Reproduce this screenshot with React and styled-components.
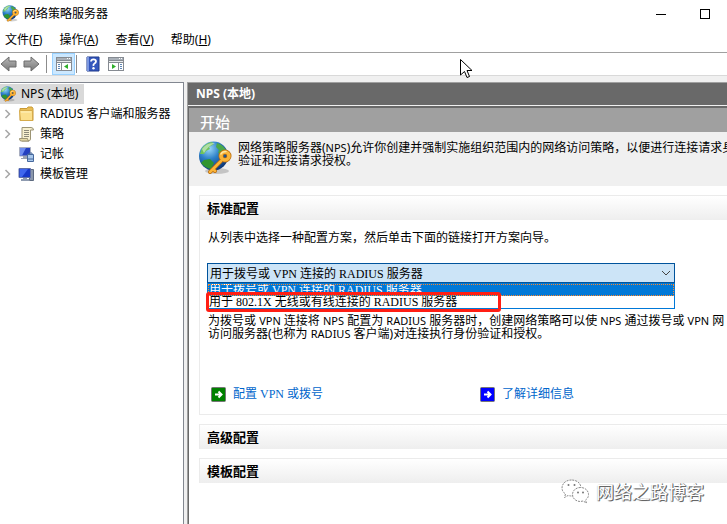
import React from "react";
import styled, { createGlobalStyle } from "styled-components";

const UI = '"Noto Sans", "Noto Sans CJK SC", sans-serif';
const SONG = '"Liberation Serif", "Noto Sans CJK SC", serif';

const GlobalStyle = createGlobalStyle`
  *, *::before, *::after { box-sizing: border-box; }
  body { margin: 0; background: #fff; font: 12px/20px ${UI}; color: #000; overflow: hidden; }
  button, select { font: inherit; color: inherit; }
  svg { flex-shrink: 0; }
`;

const Window = styled.div`
  position: relative;
  display: flex;
  flex-direction: column;
  height: 100vh;
  overflow: hidden;
  background: #f0f0f0;
`;

const TitleBar = styled.header`
  display: flex;
  align-items: center;
  height: 27px;
  padding-left: 2px;
  background: #fff;
`;

const Title = styled.h1`
  flex: 1;
  margin: 0 0 0 5px;
  font-size: 12px;
  font-weight: 400;
`;

const CaptionButton = styled.button`
  display: flex;
  align-items: center;
  justify-content: center;
  width: 44px;
  height: 26px;
  padding: 0;
  border: 0;
  background: none;
`;

const MenuBar = styled.nav`
  display: flex;
  gap: 17px;
  height: 25px;
  padding: 0 5px;
  background: #fff;
`;

const MenuItem = styled.button`
  padding: 0;
  border: 0;
  background: none;
  line-height: 26px;
`;

const ToolBar = styled.div`
  display: flex;
  align-items: center;
  height: 24px;
  border-top: 1px solid #a0a0a0;
  border-bottom: 1px solid #d9d9d9;
  background: #fff;
`;

const ToolButton = styled.button`
  display: flex;
  align-items: center;
  justify-content: center;
  width: 23px;
  height: 22px;
  padding: 0;
  border: 1px solid ${(p) => (p.$active ? "#99d1ff" : "transparent")};
  background: ${(p) => (p.$active ? "#cce8ff" : "none")};
`;

const NavButton = styled(ToolButton)`
  justify-content: flex-start;
  border: 0;
`;

const Separator = styled.span`
  width: 1px;
  height: 18px;
  margin: 0 ${(p) => p.$after || 0}px 0 ${(p) => p.$before || 0}px;
  background: #8c8c8c;
`;

const Workspace = styled.div`
  flex: 1;
  display: grid;
  grid-template-columns: 184px minmax(0, 1fr);
  gap: 3px;
  padding-top: 6px;
  min-height: 0;
`;

const TreePane = styled.aside`
  border-top: 1px solid #828790;
  border-right: 1px solid #828790;
  background: #fff;
`;

const Tree = styled.ul`
  margin: 0;
  padding: 1px 0 0;
  list-style: none;
`;

const TreeItem = styled.li`
  display: flex;
  align-items: center;
  width: max-content;
  height: 20px;
  padding: 0 6px 0 ${(p) => (p.$root ? 0 : 4)}px;
  background: ${(p) => (p.$root ? "#d9d9d9" : "none")};
  white-space: nowrap;
`;

const Twisty = styled.span`
  display: flex;
  width: 14px;
`;

const TreeLabel = styled.span`
  margin-left: 5px;
`;

const DetailPane = styled.main`
  display: flex;
  flex-direction: column;
  min-width: 0;
  border-top: 1px solid #a0a0a0;
  border-left: 1px solid #a0a0a0;
`;

const PaneHeader = styled.h2`
  height: 22px;
  margin: 0;
  padding-left: 8px;
  background: #696969;
  color: #fff;
  font-size: 12px;
  line-height: 22px;
`;

const Content = styled.div`
  flex: 1;
  margin-top: 1px;
  border-top: 2px solid #696969;
  border-left: 1px solid #696969;
  background: #fff;
  overflow: hidden;
`;

const Band = styled.h3`
  height: 24px;
  margin: 0;
  padding-left: 11px;
  background: #a0a0a0;
  color: #fff;
  font-size: 15px;
  font-weight: 500;
  line-height: 28px;
`;

const Intro = styled.div`
  display: flex;
  gap: 6px;
  height: 54px;
  padding: 9px 0 0 9px;
  background: #f0f0f0;
`;

const Text = styled.p`
  display: block;
  margin: 0;
  line-height: 13px;
  white-space: nowrap;
`;

const Latin = styled.span`
  font-size: 11px;
  line-height: 1;
`;

const Groups = styled.div`
  display: flex;
  flex-direction: column;
  gap: 9px;
  padding: 9px 0 0 10px;
`;

const Group = styled.section`
  border: 1px solid #ebebeb;
  border-width: 1px 0 ${(p) => (p.$closed ? 0 : 1)}px 1px;
`;

const GroupTitle = styled.h4`
  height: 24px;
  margin: 0;
  padding-left: 7px;
  background: linear-gradient(#fff, #eee);
  font-size: 13px;
  line-height: 25px;
`;

const GroupBody = styled.div`
  padding: 11px 0 12px 8px;
`;

const Combo = styled.div`
  position: relative;
  width: 468px;
  max-width: 100%;
  margin: 19px 0 31px -1px;
  font-family: ${SONG};
`;

const Select = styled.select`
  display: block;
  width: 100%;
  height: 20px;
  padding: 0 24px 0 2px;
  border: 1px solid #00539c;
  border-radius: 0;
  outline: 0;
  background: #cce4f7;
  appearance: none;
`;

const Arrow = styled.svg`
  position: absolute;
  right: 4px;
  top: 7px;
  pointer-events: none;
`;

const OptionList = styled.ul`
  position: absolute;
  top: 20px;
  left: 0;
  right: 0;
  margin: 0;
  padding: 0;
  border: 1px solid #0078d7;
  background: #fff;
  list-style: none;
`;

const Option = styled.li`
  height: 12px;
  padding-left: 1px;
  outline: ${(p) => (p.$on ? "1px dotted #ff8728" : "0")};
  outline-offset: -1px;
  background: ${(p) => (p.$on ? "#0078d7" : "#fff")};
  color: ${(p) => (p.$on ? "#fff" : "#000")};
  line-height: 12px;
  white-space: nowrap;
  overflow: hidden;
`;

const Marker = styled.div`
  position: absolute;
  top: 29px;
  left: -1px;
  width: 295px;
  height: 20px;
  border: 3px solid #ff1e14;
  border-radius: 3px;
`;

const Links = styled.div`
  display: grid;
  grid-template-columns: 269px auto;
  margin: 46px 0 0 3px;
`;

const ActionLink = styled.a`
  display: flex;
  align-items: center;
  gap: 7px;
  height: 16px;
  color: #0066cc;
  font-family: ${SONG};
  line-height: 16px;
  text-decoration: none;
`;

const Pointer = styled.svg`
  position: absolute;
  left: 460px;
  top: 59px;
`;

const Watermark = styled.div`
  position: absolute;
  right: 23px;
  bottom: 18px;
  display: flex;
  align-items: center;
  gap: 6px;
  color: #fff;
  font-size: 18px;
  line-height: 28px;
  text-shadow: 1px 1px 0 #666, 1px 0 0 #888, 0 1px 1px #999;
`;

function Globe({ size }) {
  return (
    <svg width={size} height={size} viewBox="0 0 34 34" aria-hidden="true">
      <defs>
        <radialGradient id="sea" cx="0.35" cy="0.25" r="0.8">
          <stop offset="0" stopColor="#9bd8f8" />
          <stop offset="0.45" stopColor="#2b7fc8" />
          <stop offset="1" stopColor="#0b3272" />
        </radialGradient>
      </defs>
      <ellipse cx="19" cy="30" rx="12" ry="3" fill="#000" opacity="0.18" />
      <circle cx="15.500" cy="15" r="14.500" fill="url(#sea)" />
      <path d="M4 7Q8 2 14 1L16 3 11 6 12 8 8 10 6 13 2 13Z" fill="#6fc35a" />
      <path d="M19 2Q26 4 29 11L26 11 24 13 20 12 21 9 18 6Z" fill="#4aa84a" />
      <path d="M6 19L12 18 16 22 13 28Q7 27 3 22Z" fill="#2f9430" />
      <path d="M4 8Q9 1 17 2Q10 5 6 12Z" fill="#fff" opacity="0.45" />
      <g fill="none" strokeLinecap="round" strokeLinejoin="round">
        <path d="M23 20L12 31M15 28L17 30" stroke="#b56a10" strokeWidth="4" />
        <circle cx="27" cy="15" r="4" stroke="#b56a10" strokeWidth="5" />
        <path d="M23 20L12 31M15 28L17 30" stroke="#fbb437" strokeWidth="2.500" />
        <circle cx="27" cy="15" r="4" stroke="#fbb437" strokeWidth="3.500" />
        <path d="M23 13Q24 10.500 28 10.500" stroke="#ffe6a0" strokeWidth="1.500" />
      </g>
    </svg>
  );
}

function NavArrow({ forward }) {
  const d = forward
    ? "M1 5H8V1L16 8 8 15V11H1Z"
    : "M16 5H9V1L1 8 9 15V11H16Z";
  return (
    <svg width="17" height="16" viewBox="0 0 17 16" aria-hidden="true">
      <defs>
        <linearGradient id="steel" x2="0" y2="1">
          <stop offset="0" stopColor="#b9b9b9" />
          <stop offset="1" stopColor="#777" />
        </linearGradient>
      </defs>
      <path d={d} fill="url(#steel)" stroke="#6c6c6c" strokeLinejoin="round" />
    </svg>
  );
}

function PanelIcon({ right }) {
  return (
    <svg width="16" height="14" viewBox="0 0 16 14" shapeRendering="crispEdges" aria-hidden="true">
      <path d="M0 0H16V14H0Z" fill="#868b92" />
      <path d="M1 1H15V3H1Z" fill="#a9b0b8" />
      <path d="M11 1h1v1h-1zM13 1h1v1h-1z" fill="#fff" />
      <path d="M1 4H15V5H1Z" fill="#e8eaec" />
      <path d={right ? "M1 6H10V13H1ZM11 6H15V13H11Z" : "M1 6H5V13H1ZM6 6H15V13H6Z"} fill="#fff" />
      <path d={right ? "M12 7h2v1h-2zM12 9h2v1h-2zM12 11h2v1h-2z" : "M2 7h2v1h-2zM2 9h2v1h-2zM2 11h2v1h-2z"} fill="#5f86b5" />
      <path d={right ? "M4 7L8 9.500 4 12Z" : "M12 7L8 9.500 12 12Z"} fill="#2fae2a" shapeRendering="auto" />
    </svg>
  );
}

function HelpIcon() {
  return (
    <svg width="14" height="16" viewBox="0 0 14 16" aria-hidden="true">
      <path d="M1 1H13V15H1Z" fill="#3457bd" stroke="#1f3a8c" />
      <path d="M1 1H3V15H1Z" fill="#7b97e0" />
      <path d="M5 5.500Q5.200 3.300 7.500 3.300T10 5.300Q10 6.700 8.500 7.500T7.500 10" fill="none" stroke="#fff" strokeWidth="1.800" />
      <circle cx="7.500" cy="12.300" r="1.200" fill="#fff" />
    </svg>
  );
}

function Chevron() {
  return (
    <svg width="8" height="10" viewBox="0 0 8 10" aria-hidden="true">
      <path d="M1.500 1L5.500 5 1.500 9" fill="none" stroke="#a6a6a6" strokeWidth="1.500" />
    </svg>
  );
}

function FolderIcon() {
  return (
    <svg width="17" height="16" viewBox="0 0 17 16" aria-hidden="true">
      <path d="M2 2.500H9L10 1H14L15 2.500V14.500H2Z" fill="#e9bd55" stroke="#c99a35" />
      <path d="M1.500 4.500H14.500V14.500H2.500Z" fill="#fbdf8c" stroke="#d6ab4b" />
      <path d="M3 6H13" stroke="#fff2c0" />
    </svg>
  );
}

function ScrollIcon() {
  return (
    <svg width="17" height="16" viewBox="0 0 17 16" aria-hidden="true">
      <path d="M4 1.500H13Q15.500 1.500 15.500 4H12.500V13Q12.500 15 10 15H4Z" fill="#f7f0cf" stroke="#9c9474" />
      <path d="M1.500 12.500H9.500Q9.500 15 11 15H3Q1.500 15 1.500 12.500Z" fill="#e5d9a5" stroke="#9c9474" />
      <path d="M6 4.500H11M6 6.500H11M6 8.500H11M6 10.500H11" stroke="#8c8a7a" />
    </svg>
  );
}

function LogIcon() {
  return (
    <svg width="17" height="16" viewBox="0 0 17 16" aria-hidden="true">
      <path d="M1.500 1.500H12.500V10H1.500Z" fill="#2440c0" stroke="#a8aec0" />
      <path d="M2 2H8L4 9.500H2Z" fill="#6f8df0" />
      <path d="M5 10H9V12H11V13H3V12H5Z" fill="#9aa2b2" />
      <path d="M9.500 8.500H15.500V15.500H9.500Z" fill="#a9c8ec" stroke="#46689c" />
      <path d="M11 8V7H14V8M10 13H15" stroke="#46689c" fill="none" />
    </svg>
  );
}

function ServerIcon() {
  return (
    <svg width="17" height="16" viewBox="0 0 17 16" aria-hidden="true">
      <path d="M11.500 3.500H15.500V14.500H11.500Z" fill="#8b98ad" stroke="#5e6b80" />
      <path d="M1 2.500H12.500V11.500H1Z" fill="#1738c8" stroke="#5f6fa8" />
      <path d="M2 3H10L4 11H2Z" fill="#3f66ee" />
      <path d="M5 12H9V13H11V15H3V13H5Z" fill="#8f9bb0" />
    </svg>
  );
}

function GoIcon({ color }) {
  return (
    <svg width="15" height="15" viewBox="0 0 15 15" aria-hidden="true">
      <rect x="0.500" y="0.500" width="14" height="14" rx="1" fill={color} stroke="#777" />
      <path d="M4 7.500H10M7.500 4.500L10.500 7.500 7.500 10.500" fill="none" stroke="#fff" strokeWidth="2" />
    </svg>
  );
}

function ChatIcon() {
  return (
    <svg width="29" height="26" viewBox="0 0 29 26" aria-hidden="true">
      <g fill="#fff" stroke="#8a8a8a" strokeWidth="1" strokeDasharray="2 1">
        <path d="M10.500 1C5 1 1 4.500 1 9Q1 12.500 4.500 15L3.500 18.500 7 16.500Q9 17 11 17C16 17 20 13.500 20 9S16 1 10.500 1Z" />
        <path d="M19.500 8.500C15 8.500 11.500 11.500 11.500 15.500S15 22.500 19.500 22.500L22 22 25.500 24 24.500 21Q27.500 19 27.500 15.500C27.500 11.500 24 8.500 19.500 8.500Z" />
      </g>
      <g fill="#777">
        <circle cx="7.500" cy="6" r="1" />
        <circle cx="13.500" cy="6" r="1" />
        <circle cx="17" cy="13.500" r="1" />
        <circle cx="22" cy="13.500" r="1" />
      </g>
    </svg>
  );
}

const menus = [
  ["文件", "F"],
  ["操作", "A"],
  ["查看", "V"],
  ["帮助", "H"],
];

const nodes = [
  { label: "RADIUS 客户端和服务器", Icon: FolderIcon, expandable: true },
  { label: "策略", Icon: ScrollIcon, expandable: true },
  { label: "记帐", Icon: LogIcon, expandable: false },
  { label: "模板管理", Icon: ServerIcon, expandable: true },
];

const scenarios = ["用于拨号或 VPN 连接的 RADIUS 服务器", "用于 802.1X 无线或有线连接的 RADIUS 服务器"];

export default function App() {
  return (
    <Window>
      <GlobalStyle />
      <TitleBar>
        <Globe size={17} />
        <Title>网络策略服务器</Title>
        <CaptionButton aria-label="最小化">
          <svg width="10" height="10" shapeRendering="crispEdges"><path d="M0 5H10V6H0Z" /></svg>
        </CaptionButton>
        <CaptionButton aria-label="最大化">
          <svg width="10" height="10"><rect x="0.500" y="0.500" width="9" height="9" fill="none" stroke="#000" /></svg>
        </CaptionButton>
      </TitleBar>
      <MenuBar>
        {menus.map(([name, key]) => (
          <MenuItem key={key}>{name}(<u>{key}</u>)</MenuItem>
        ))}
      </MenuBar>
      <ToolBar>
        <NavButton aria-label="后退"><NavArrow /></NavButton>
        <NavButton aria-label="前进"><NavArrow forward /></NavButton>
        <Separator $after={5} />
        <ToolButton $active aria-label="显示/隐藏控制台树"><PanelIcon /></ToolButton>
        <Separator $before={1} $after={4} />
        <ToolButton aria-label="帮助"><HelpIcon /></ToolButton>
        <ToolButton aria-label="显示/隐藏操作窗格"><PanelIcon right /></ToolButton>
      </ToolBar>
      <Workspace>
        <TreePane>
          <Tree>
            <TreeItem $root>
              <Globe size={16} />
              <TreeLabel>NPS (本地)</TreeLabel>
            </TreeItem>
            {nodes.map(({ label, Icon, expandable }) => (
              <TreeItem key={label}>
                <Twisty>{expandable && <Chevron />}</Twisty>
                <Icon />
                <TreeLabel>{label}</TreeLabel>
              </TreeItem>
            ))}
          </Tree>
        </TreePane>
        <DetailPane>
          <PaneHeader>NPS (本地)</PaneHeader>
          <Content>
            <Band>开始</Band>
            <Intro>
              <Globe size={34} />
              <Text>
                网络策略服务器(<Latin>NPS</Latin>)允许你创建并强制实施组织范围内的网络访问策略，以便进行连接请求身
                <br />
                验证和连接请求授权。
              </Text>
            </Intro>
            <Groups>
              <Group>
                <GroupTitle>标准配置</GroupTitle>
                <GroupBody>
                  <Text as="label" htmlFor="scenario">从列表中选择一种配置方案，然后单击下面的链接打开方案向导。</Text>
                  <Combo>
                    <Select id="scenario" defaultValue={scenarios[0]}>
                      {scenarios.map((s) => <option key={s}>{s}</option>)}
                    </Select>
                    <Arrow width="10" height="6" viewBox="0 0 10 6" aria-hidden="true">
                      <path d="M1 1L5 5 9 1" fill="none" stroke="#444" />
                    </Arrow>
                    <OptionList role="listbox" aria-label="配置方案">
                      {scenarios.map((s, i) => (
                        <Option key={s} role="option" aria-selected={i === 0} $on={i === 0}>{s}</Option>
                      ))}
                    </OptionList>
                    <Marker />
                  </Combo>
                  <Text>
                    为拨号或 <Latin>VPN</Latin> 连接将 <Latin>NPS</Latin> 配置为 <Latin>RADIUS</Latin> 服务器时，创建网络策略可以使 <Latin>NPS</Latin> 通过拨号或 <Latin>VPN</Latin> 网
                    <br />
                    访问服务器(也称为 <Latin>RADIUS</Latin> 客户端)对连接执行身份验证和授权。
                  </Text>
                  <Links>
                    <ActionLink href="#configure"><GoIcon color="#008000" />配置 VPN 或拨号</ActionLink>
                    <ActionLink href="#learn"><GoIcon color="#0000ff" />了解详细信息</ActionLink>
                  </Links>
                </GroupBody>
              </Group>
              <Group $closed><GroupTitle>高级配置</GroupTitle></Group>
              <Group $closed><GroupTitle>模板配置</GroupTitle></Group>
            </Groups>
          </Content>
        </DetailPane>
      </Workspace>
      <Pointer width="13" height="20" viewBox="0 0 13 20" aria-hidden="true">
        <path d="M0.500 0.500V16L4.500 12.500 7 18.500 9.500 17.500 7 11.500H12Z" fill="#fff" stroke="#000" />
      </Pointer>
      <Watermark><ChatIcon />网络之路博客</Watermark>
    </Window>
  );
}
